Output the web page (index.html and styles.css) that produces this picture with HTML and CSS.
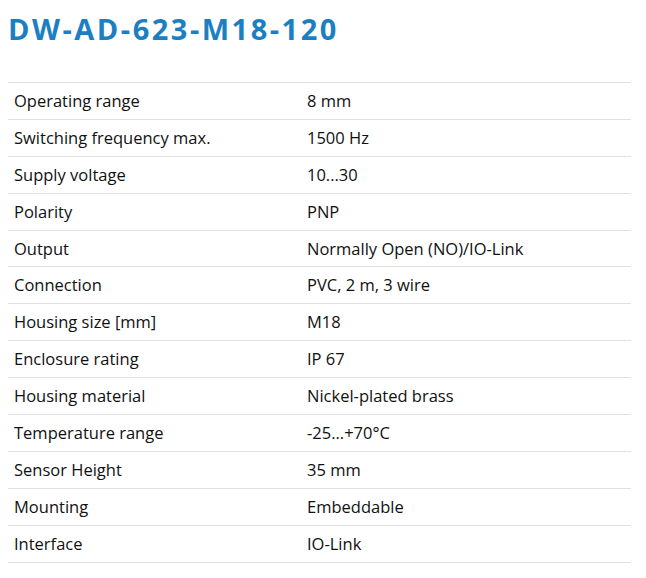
FILE: index.html
```
<!DOCTYPE html>
<html lang="en">
<head>
<meta charset="utf-8">
<title>DW-AD-623-M18-120</title>
<link rel="stylesheet" href="styles.css">
</head>
<body>
<h1 class="title">DW-AD-623-M18-120</h1>
<table class="specs">
<tbody>
<tr><td>Operating range</td><td>8 mm</td></tr>
<tr><td>Switching frequency max.</td><td>1500 Hz</td></tr>
<tr><td>Supply voltage</td><td>10...30</td></tr>
<tr><td>Polarity</td><td>PNP</td></tr>
<tr><td>Output</td><td>Normally Open (NO)/IO-Link</td></tr>
<tr><td>Connection</td><td>PVC, 2 m, 3 wire</td></tr>
<tr><td>Housing size [mm]</td><td>M18</td></tr>
<tr><td>Enclosure rating</td><td>IP 67</td></tr>
<tr><td>Housing material</td><td>Nickel-plated brass</td></tr>
<tr><td>Temperature range</td><td>-25...+70°C</td></tr>
<tr><td>Sensor Height</td><td>35 mm</td></tr>
<tr><td>Mounting</td><td>Embeddable</td></tr>
<tr><td>Interface</td><td>IO-Link</td></tr>
</tbody>
</table>
</body>
</html>
```
FILE: styles.css
```
html, body {
  margin: 0;
  padding: 0;
  background: #ffffff;
}
body {
  padding: 8px 15px 0 8px;
  font-family: "Open Sans", "Noto Sans", sans-serif;
  color: #111111;
}
.title {
  margin: 0;
  padding-top: 4px;
  height: 68px;
  box-sizing: border-box;
  font-size: 29px;
  line-height: 34px;
  font-weight: 700;
  color: #1b7fc2;
  letter-spacing: 2.5px;
}
.specs {
  width: 623px;
  border-collapse: collapse;
  font-size: 16.5px;
  margin-top: 6px;
}
.specs tr {
  border-top: 1px solid #e0e0e0;
}
.specs tbody tr:last-child {
  border-bottom: 1px solid #e0e0e0;
}
.specs td {
  height: 35.9px;
  padding: 0 6px;
  vertical-align: middle;
  line-height: 20px;
}
.specs td:first-child {
  width: 281px;
}
```
